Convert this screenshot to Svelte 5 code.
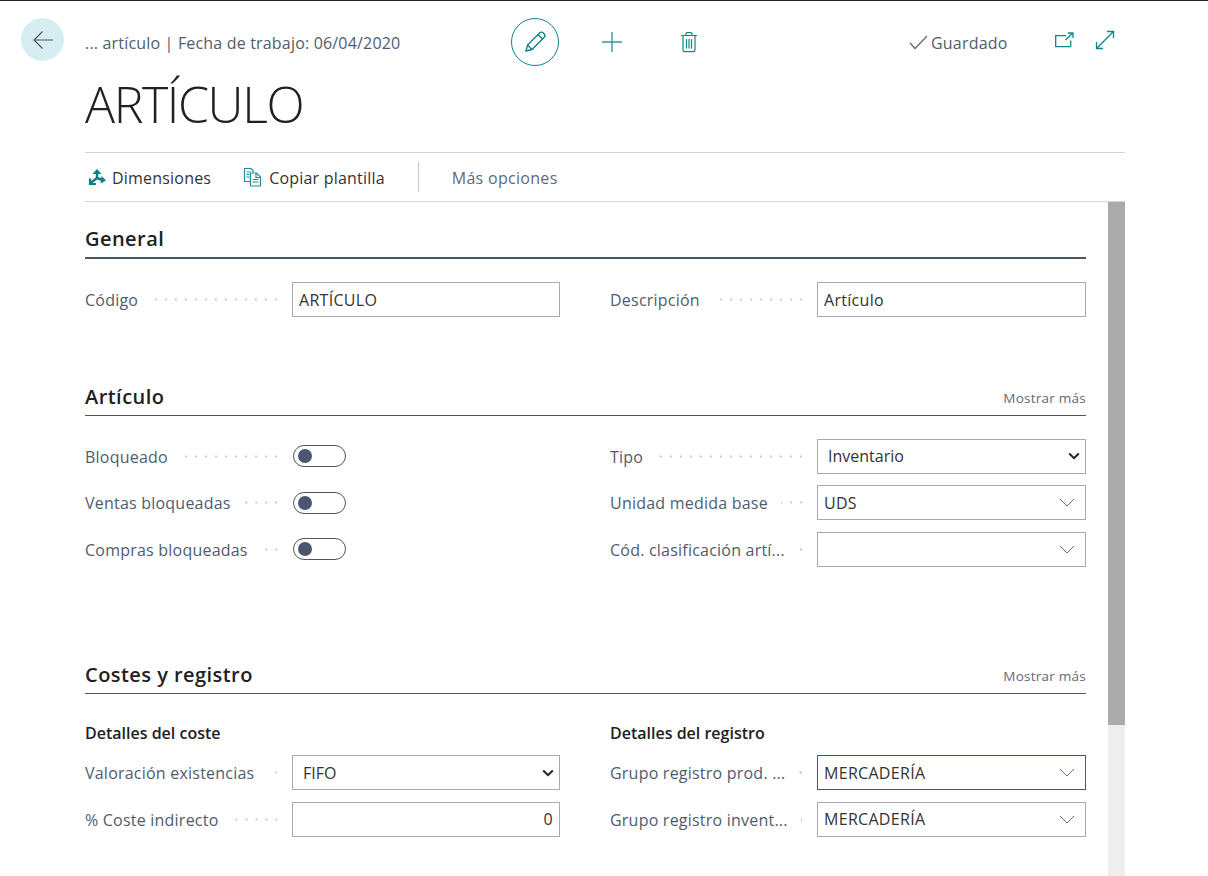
<script lang="ts">
  const articulo = {
    left: [
      { label: 'Bloqueado', toggle: true },
      { label: 'Ventas bloqueadas', toggle: true },
      { label: 'Compras bloqueadas', toggle: true }
    ],
    right: [
      { label: 'Tipo', value: 'Inventario', kind: 'select' },
      { label: 'Unidad medida base', value: 'UDS', kind: 'lookup' },
      { label: 'Cód. clasificación artí...', value: '', kind: 'lookup' }
    ]
  };
  const costLeft = [
    { label: 'Valoración existencias', value: 'FIFO', kind: 'select' },
    { label: '% Coste indirecto', value: '0', kind: 'number' }
  ];
  const costRight = [
    { label: 'Grupo registro prod. ...', value: 'MERCADERÍA', kind: 'lookup', focus: true },
    { label: 'Grupo registro invent...', value: 'MERCADERÍA', kind: 'lookup' }
  ];
</script>

{#snippet field(f)}
  <div class="field">
    <span class="label">{f.label}</span>
    <span class="dots"></span>
    {#if f.toggle}
      <div class="slot"><span class="toggle"><span class="knob"></span></span></div>
    {:else}
      <div class="input {f.kind ?? ''}" class:focus={f.focus}>
        <span class="val">{f.value}</span>
        {#if f.kind === 'select'}
          <svg class="chev" width="12" height="8" viewBox="0 0 12 8"><path d="M1.2 1.5 6 6.2l4.8-4.7" fill="none" stroke="#222" stroke-width="2"/></svg>
        {:else if f.kind === 'lookup'}
          <svg class="chev" width="16" height="9" viewBox="0 0 16 9"><path d="M1 1l7 7 7-7" fill="none" stroke="#6a6f78" stroke-width="1"/></svg>
        {/if}
      </div>
    {/if}
  </div>
{/snippet}

<div class="page">
  <header class="top">
    <button class="back" aria-label="Volver">
      <svg width="20" height="18" viewBox="0 0 20 18"><path d="M20 9H1M9.5.5 1 9l8.5 8.5" fill="none" stroke="#555" stroke-width="1.2"/></svg>
    </button>
    <div class="crumb">... artículo | Fecha de trabajo: 06/04/2020</div>
    <div class="actions">
      <button class="edit" aria-label="Editar">
        <svg width="24" height="24" viewBox="0 0 24 24" fill="none" stroke="#0f868c" stroke-width="1.4"><path d="M3 21l1.5-6L16.8 2.8c.9-.9 2.4-.9 3.3 0l1.1 1.1c.9.9.9 2.4 0 3.3L9 19.5z"/><path d="M4.5 15 9 19.5M15 4.5l4.5 4.5"/></svg>
      </button>
      <button class="plain plus" aria-label="Nuevo">
        <svg width="22" height="22" viewBox="0 0 22 22"><path d="M11 1v20M1 11h20" stroke="#2f9a9f" stroke-width="1.4"/></svg>
      </button>
      <button class="plain trash" aria-label="Eliminar">
        <svg width="18" height="22" viewBox="0 0 18 22" fill="none" stroke="#0f868c" stroke-width="1.2"><path d="M1 4.5h16M3 4.5V19c0 1 .7 1.6 1.6 1.6h8.8c.9 0 1.6-.6 1.6-1.6V4.5M6 4.5V2.6c0-.5.4-1 1-1h4c.6 0 1 .5 1 1v1.9M6.5 8v9.5M9 8v9.5M11.5 8v9.5"/></svg>
      </button>
    </div>
    <div class="saved">
      <svg width="19" height="15" viewBox="0 0 19 15"><path d="M1 8l5 5.5L18 1" fill="none" stroke="#5b6575" stroke-width="1.2"/></svg>
      <span>Guardado</span>
    </div>
    <button class="plain open" aria-label="Abrir">
      <svg width="20" height="16" viewBox="0 0 20 16" fill="none" stroke="#0f868c" stroke-width="1.3"><path d="M12 3.6H1.7v11h15V8.5"/><path d="M11.5 8 18.5 1.2M14 1h5v5"/></svg>
    </button>
    <button class="plain expand" aria-label="Expandir">
      <svg width="20" height="20" viewBox="0 0 20 20" fill="none" stroke="#0f868c" stroke-width="1.3"><path d="M2 18 18 2M12 1.5h6.5V8M1.5 12v6.5H8"/></svg>
    </button>
  </header>

  <h1>ARTÍCULO</h1>

  <nav class="bar">
    <span class="cmd">
      <svg width="18" height="18" viewBox="0 0 18 18" fill="none" stroke="#0f7f86" stroke-width="2.4"><path d="M9 10V4M9 10l-6.5 5M9 10l5.5 2"/><path d="M4.5 6 9 1l4.5 5z" fill="#0f7f86" stroke="none"/><path d="M2 10.5V16h6" stroke-width="2.2"/><path d="M13.500 8 18 12.500l-5.500 3z" fill="#0f7f86" stroke="none"/></svg>
      <span class="t">Dimensiones</span>
    </span>
    <span class="cmd">
      <svg width="20" height="20" viewBox="0 0 20 20" fill="none" stroke="#1f9096" stroke-width="1.2"><path d="M7.5 14.5H1.5V1.5H8l2 2v2"/><path d="M3.5 5h4M3.5 7.5h3M3.5 10h3"/><path d="M7.5 6h6l4 4v9h-10z"/><path d="M13 6v4.5h4.5M9.5 12.5h6M9.5 15h6"/></svg>
      <span class="t">Copiar plantilla</span>
    </span>
    <span class="sep"></span>
    <span class="t more">Más opciones</span>
  </nav>

  <div class="scrollarea">
    <main class="form">
      <section class="general">
        <div class="head strong"><h2>General</h2></div>
        <div class="cols">
          <div class="col">{@render field({ label: 'Código', value: 'ARTÍCULO', kind: 'text' })}</div>
          <div class="col">{@render field({ label: 'Descripción', value: 'Artículo', kind: 'text' })}</div>
        </div>
      </section>

      <section class="art">
        <div class="head"><h2>Artículo</h2><span class="show">Mostrar más</span></div>
        <div class="cols">
          <div class="col">{#each articulo.left as f}{@render field(f)}{/each}</div>
          <div class="col">{#each articulo.right as f}{@render field(f)}{/each}</div>
        </div>
      </section>

      <section class="costes">
        <div class="head"><h2>Costes y registro</h2><span class="show">Mostrar más</span></div>
        <div class="cols">
          <div class="col">
            <h3>Detalles del coste</h3>
            {#each costLeft as f}{@render field(f)}{/each}
          </div>
          <div class="col">
            <h3>Detalles del registro</h3>
            {#each costRight as f}{@render field(f)}{/each}
          </div>
        </div>
      </section>
    </main>
    <div class="scrollbar"><div class="thumb"></div></div>
  </div>
</div>

<style>
  :global(body) {
    background: #fff;
    overflow: hidden;
  }
  .page {
    height: 876px;
    box-sizing: border-box;
    border-top: 1px solid #222;
    overflow: hidden;
    font-family: "Open Sans", "Noto Sans", sans-serif;
    font-size: 15px;
    color: #505c6d;
  }
  button {
    background: none;
    border: 0;
    padding: 0;
    display: flex;
    align-items: center;
    justify-content: center;
  }

  /* header */
  .top {
    display: flex;
    align-items: center;
    height: 78px;
    padding-left: 21px;
    padding-top: 3px;
    box-sizing: border-box;
  }
  .back {
    width: 43px;
    height: 43px;
    border-radius: 50%;
    background: #d6eef1;
    margin-right: 21px;
    margin-top: -4px;
  }
  .crumb {
    width: 426px;
    font-size: 16px;
    letter-spacing: 0.18px;
    white-space: nowrap;
    padding-top: 3px;
  }
  .actions {
    display: flex;
    align-items: center;
    width: 398px;
  }
  .edit {
    width: 48px;
    height: 48px;
    box-sizing: border-box;
    border: 1px solid #0f868c;
    border-radius: 50%;
  }
  .plus { margin-left: 42px; }
  .trash { margin-left: 57px; }
  .saved {
    display: flex;
    align-items: center;
    gap: 3px;
    width: 145px;
    padding-top: 2px;
    font-size: 16px;
    letter-spacing: 0.2px;
  }
  .open { margin-right: 21px; margin-top: -3px; }
  .expand { margin-top: -3px; }

  h1 {
    margin: 0;
    padding-left: 85px;
    height: 73px;
    font-weight: 300;
    font-size: 50px;
    line-height: 50px;
    color: #212121;
    letter-spacing: -1.4px;
  }

  /* command bar */
  .bar {
    margin-left: 85px;
    width: 1040px;
    height: 50px;
    box-sizing: border-box;
    border-top: 1px solid #d5d5d5;
    border-bottom: 1px solid #d5d5d5;
    display: flex;
    align-items: center;
    font-size: 16px;
    letter-spacing: 0.2px;
    color: #333;
  }
  .t { padding-top: 1px; }
  .cmd {
    display: flex;
    align-items: center;
    gap: 6px;
    margin-left: 3px;
    margin-right: 29px;
  }
  .sep {
    width: 1px;
    height: 30px;
    background: #c8c8c8;
    margin-left: 4px;
    margin-right: 33px;
  }
  .more { color: #5f6a79; letter-spacing: 0.3px; }

  /* form */
  .scrollarea {
    display: flex;
    margin-left: 85px;
    width: 1040px;
    height: 680px;
  }
  .form {
    width: 1001px;
  }
  .scrollbar {
    margin-left: 22px;
    width: 17px;
    background: #eee;
  }
  .thumb {
    height: 523px;
    background: #ababab;
  }
  .head {
    display: flex;
    justify-content: space-between;
    align-items: flex-start;
    height: 34px;
    border-bottom: 1px solid #4b5563;
  }
  .head.strong { border-bottom-width: 2px; }
  h2 {
    margin: 0;
    font-size: 20px;
    line-height: 32px;
    font-weight: 600;
    letter-spacing: 0.45px;
    color: #212121;
  }
  .show {
    font-size: 13.5px;
    line-height: 34px;
    letter-spacing: 0.25px;
    color: #5f6a79;
  }
  h3 {
    margin: 0 0 12px;
    height: 20px;
    line-height: 20px;
    font-size: 16px;
    font-weight: 600;
    letter-spacing: 0;
    color: #212121;
  }
  .general { padding-top: 21px; height: 164px; box-sizing: border-box; }
  .general .cols { padding-top: 23px; }
  .art { height: 277px; box-sizing: border-box; padding-top: 15px; }
  .art .cols { padding-top: 22.5px; }
  .costes { padding-top: 16px; }
  .costes .cols { padding-top: 29px; }
  .cols {
    display: grid;
    grid-template-columns: 475px 476px;
    column-gap: 50px;
  }
  .field {
    display: flex;
    align-items: center;
    height: 35px;
    margin-bottom: 11.5px;
  }
  .label {
    font-size: 16px;
    letter-spacing: 0.22px;
    white-space: nowrap;
    padding-top: 1px;
  }
  .dots {
    flex: 1;
    height: 3px;
    margin: 0 11px 0 13px;
    background: radial-gradient(circle at center, #c4c7cc 1px, transparent 1.2px) right / 10px 3px repeat-x;
  }
  .slot {
    width: 268px;
    box-sizing: border-box;
    padding-left: 1px;
  }
  .col:nth-child(2) .slot { width: 269px; }
  .toggle {
    display: block;
    position: relative;
    width: 53px;
    height: 22px;
    box-sizing: border-box;
    border: 1px solid #4b5563;
    border-radius: 11px;
  }
  .knob {
    position: absolute;
    left: 4px;
    top: 3px;
    width: 14px;
    height: 14px;
    border-radius: 50%;
    background: #4b5670;
  }
  .input {
    width: 268px;
    height: 35px;
    flex: none;
    box-sizing: border-box;
    border: 1px solid #a9a9a9;
    display: flex;
    align-items: center;
    justify-content: space-between;
    padding: 0 6px;
    font-size: 16px;
    letter-spacing: 0.3px;
    color: #333;
  }
  .col:nth-child(2) .input { width: 269px; }
  .input.select { padding-left: 10px; padding-right: 5px; letter-spacing: 0; }
  .input.lookup { padding-right: 10px; }
  .input.number { justify-content: flex-end; }
  .input.focus { border-color: #0f7178; }
</style>
